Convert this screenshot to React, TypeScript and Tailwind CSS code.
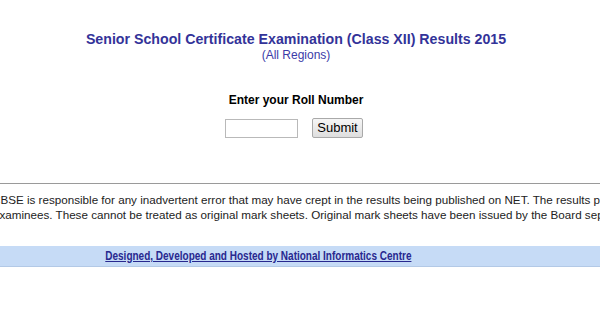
export default function App() {
  return (
    <div className="w-[600px] h-[316px] overflow-hidden bg-white" style={{ fontFamily: '"Liberation Sans", Arial, sans-serif' }}>
      <div className="w-[592px] flex flex-col items-center pt-[31px]">
        <div className="text-[14.2px] leading-[17px] font-bold text-[#333399]">
          Senior School Certificate Examination (Class XII) Results 2015
        </div>
        <div className="text-[12px] leading-[14px] text-[#3b3ba8]">(All Regions)</div>
        <div className="mt-[31px] text-[12px] leading-[15px] font-bold text-black">Enter your Roll Number</div>
        <div className="mt-[10px] mr-[4px] flex items-center gap-[14px]">
          <input
            type="text"
            className="w-[73px] h-[19px] border border-[#b9b9b9] bg-white outline-none"
          />
          <button className="h-[20px] px-[4px] text-[13px] leading-[16px] text-black border border-[#a9a9a9] rounded-[2px] bg-gradient-to-b from-[#f6f6f6] to-[#dedede]">
            Submit
          </button>
        </div>
      </div>
      <div className="mt-[45px] h-px bg-[#9a9a9a] w-full" />
      <div className="mt-[8px] text-[11.65px] leading-[15px] text-[#222] whitespace-nowrap">
        <div className="ml-[-8px]">
          CBSE is responsible for any inadvertent error that may have crept in the results being published on NET. The results published on net are for immediate information to the
        </div>
        <div className="ml-[-7px]">
          examinees. These cannot be treated as original mark sheets. Original mark sheets have been issued by the Board separately.
        </div>
      </div>
      <div className="mt-[24px] h-[21px] bg-[#c6dbf6] border-b border-[#b3c9e6] flex items-center justify-center pr-[84px]">
        <a
          href="#"
          className="inline-block scale-x-[0.8] text-[12.5px] font-bold text-[#28288f] underline"
        >
          Designed, Developed and Hosted by National Informatics Centre
        </a>
      </div>
    </div>
  );
}
